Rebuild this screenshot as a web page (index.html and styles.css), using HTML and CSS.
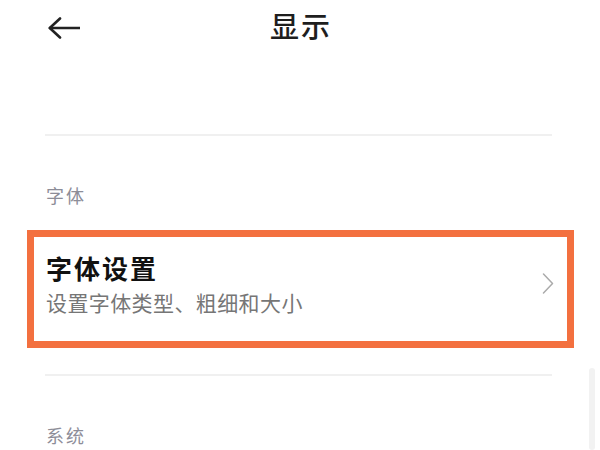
FILE: index.html
```html
<!DOCTYPE html>
<html lang="zh-CN">
<head>
<meta charset="utf-8">
<title>显示</title>
<link rel="stylesheet" href="styles.css">
</head>
<body>
<div class="page">
  <header class="header">
    <div class="back">
      <svg class="back-icon" width="32" height="22" viewBox="0 0 32 22" fill="none" stroke="#222" stroke-width="2.6" stroke-linecap="round" stroke-linejoin="round">
        <path d="M2 11H31.5"/>
        <path d="M12 1.5L1.8 11L12 20.5"/>
      </svg>
    </div>
    <h1 class="title">显示</h1>
    <div></div>
  </header>

  <div class="divider first"></div>

  <div class="section-label">字体</div>

  <div class="item highlight">
    <div class="item-text">
      <div class="item-title">字体设置</div>
      <div class="item-sub">设置字体类型、粗细和大小</div>
    </div>
    <svg class="chev" width="12" height="21" viewBox="0 0 12 21" fill="none" stroke="#ababab" stroke-width="1.5" stroke-linecap="round" stroke-linejoin="round">
      <path d="M1.5 1L10.5 10.5L1.5 20"/>
    </svg>
  </div>

  <div class="divider second"></div>

  <div class="section-label">系统</div>

  <div class="scrollbar"></div>
</div>
</body>
</html>
```

FILE: styles.css
```css
html, body {
  margin: 0;
  padding: 0;
  background: #ffffff;
}

body {
  font-family: "Noto Sans CJK SC", "Noto Sans", sans-serif;
  width: 600px;
  height: 450px;
  overflow: hidden;
}

.page {
  display: flex;
  flex-direction: column;
}

.header {
  display: grid;
  grid-template-columns: 1fr auto 1fr;
  height: 50px;
}

.back {
  padding-top: 17px;
  padding-left: 48px;
}

.back-icon {
  display: block;
}

.title {
  margin: 0;
  font-size: 29px;
  line-height: 50px;
  font-weight: 500;
  letter-spacing: 2px;
  color: #1e1e1e;
  padding-left: 2px;
}

.divider {
  height: 2px;
  background: #f0f0f0;
  margin-left: 45px;
  margin-right: 48px;
}

.divider.first {
  margin-top: 84px;
}

.divider.second {
  margin-top: 26px;
}

.section-label {
  margin-top: 46px;
  padding-left: 46px;
  font-size: 18px;
  line-height: 26px;
  letter-spacing: 2px;
  color: #8d8d98;
}

.item {
  display: flex;
  align-items: center;
  margin: 22px 26px 0 27px;
  padding: 13px 13px 25px 12px;
}

.highlight {
  border: 7px solid #f3703f;
}

.item-text {
  flex: 1;
}

.item-title {
  font-size: 26px;
  line-height: 36px;
  font-weight: 700;
  letter-spacing: 2px;
  color: #111111;
}

.item-sub {
  margin-top: 2px;
  font-size: 21px;
  line-height: 28px;
  letter-spacing: 0.4px;
  color: #767676;
}

.chev {
  display: block;
  flex: none;
}

.scrollbar {
  position: fixed;
  right: 5px;
  top: 368px;
  bottom: 0;
  width: 6px;
  border-radius: 3px;
  background: #f2f2f2;
}
```
